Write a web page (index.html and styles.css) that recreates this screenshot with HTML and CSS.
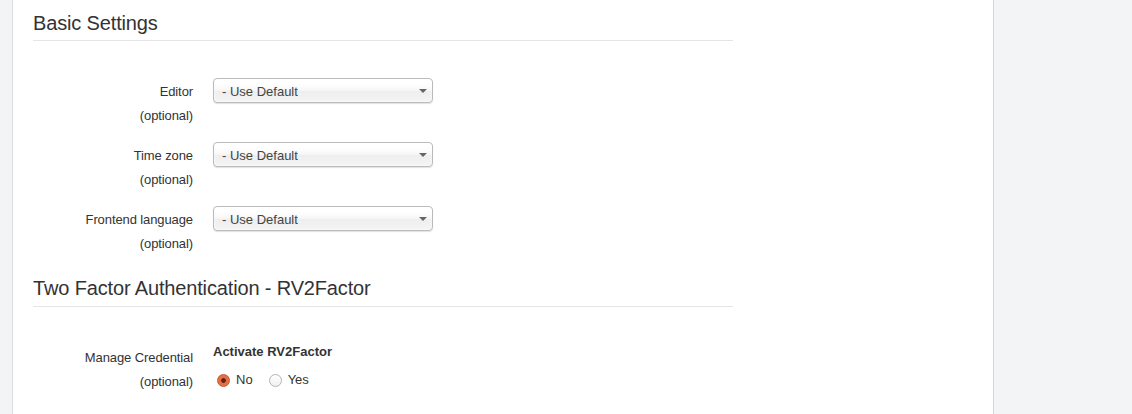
FILE: index.html
```html
<!DOCTYPE html>
<html lang="en">
<head>
  <meta charset="UTF-8">
  <meta name="viewport" content="width=device-width, initial-scale=1.0">
  <title>Edit Profile</title>
  <link rel="stylesheet" href="styles.css">
</head>
<body>
  <div class="page">
    <div class="side-left"></div>

    <div class="main">
      <div class="fieldset">
        <h2 class="legend">Basic Settings</h2>

        <div class="control-group">
          <div class="control-label">Editor<span class="optional">(optional)</span></div>
          <div class="controls">
            <div class="chzn-single"><span>- Use Default</span><b></b></div>
          </div>
        </div>

        <div class="control-group">
          <div class="control-label">Time zone<span class="optional">(optional)</span></div>
          <div class="controls">
            <div class="chzn-single"><span>- Use Default</span><b></b></div>
          </div>
        </div>

        <div class="control-group">
          <div class="control-label">Frontend language<span class="optional">(optional)</span></div>
          <div class="controls">
            <div class="chzn-single"><span>- Use Default</span><b></b></div>
          </div>
        </div>
      </div>

      <div class="fieldset second">
        <h2 class="legend">Two Factor Authentication - RV2Factor</h2>

        <div class="control-group">
          <div class="control-label">Manage Credential<span class="optional">(optional)</span></div>
          <div class="controls">
            <div class="radio-title">Activate RV2Factor</div>
            <div class="radio-row">
              <label class="radio"><input type="radio" name="rv2factor" checked> No</label>
              <label class="radio"><input type="radio" name="rv2factor"> Yes</label>
            </div>
          </div>
        </div>
      </div>
    </div>

    <div class="side-right"></div>
  </div>
</body>
</html>
```

FILE: styles.css
```css
body {
  margin: 0;
  font-family: "Liberation Sans", Arial, sans-serif;
  font-size: 13px;
  color: #333;
  background: #f3f4f6;
}
.page {
  display: flex;
  min-height: 100vh;
}
.side-left {
  width: 12px;
  background: #f3f4f6;
  border-right: 1px solid #dcdcdc;
}
.main {
  width: 940px;
  background: #fff;
  padding: 0 20px;
  border-right: 1px solid #d6d6d6;
}
.side-right {
  flex: 1;
  background: #f3f4f6;
}

.fieldset {
  width: 700px;
}
.fieldset.second {
  margin-top: 10px;
}
.legend {
  margin: 0 0 37px;
  padding: 11px 0 5px;
  font-size: 20px;
  letter-spacing: -0.15px;
  line-height: 24px;
  font-weight: normal;
  color: #333;
  border-bottom: 1px solid #e5e5e5;
}
.second .legend {
  padding: 10px 0 6px;
}

.control-group {
  display: flex;
  margin-bottom: 14px;
}
.control-group:last-child {
  margin-bottom: 0;
}
.control-label {
  width: 160px;
  margin-right: 20px;
  padding-top: 2px;
  text-align: right;
  line-height: 24px;
  letter-spacing: -0.1px;
}
.optional {
  display: block;
}
.controls {
  width: 220px;
}

.chzn-single {
  position: relative;
  box-sizing: border-box;
  height: 25px;
  padding: 2px 0 0 8px;
  line-height: 21px;
  color: #444;
  border: 1px solid #bbb;
  border-radius: 4px;
  background: linear-gradient(#fff 20%, #f6f6f6 50%, #eee 52%, #f4f4f4);
  box-shadow: 0 0 3px #fff inset, 0 1px 1px rgba(0,0,0,0.12);
}
.chzn-single b {
  position: absolute;
  right: 5px;
  top: 10px;
  width: 0;
  height: 0;
  border-left: 4px solid transparent;
  border-right: 4px solid transparent;
  border-top: 4px solid #666;
}

.radio-title {
  font-weight: bold;
  line-height: 16px;
}
.radio-row {
  display: flex;
  margin-top: 12px;
  line-height: 16px;
}
.radio {
  display: flex;
  align-items: center;
  margin-right: 12px;
}
.radio input {
  appearance: none;
  -webkit-appearance: none;
  box-sizing: border-box;
  width: 13px;
  height: 13px;
  margin: 0 6px 0 4px;
  border: 1px solid #b4b4b4;
  border-radius: 50%;
  background: linear-gradient(#fff, #f0f0f0);
}
.radio input:checked {
  border-color: #c9552e;
  background: radial-gradient(circle, #5e2411 0 2px, #e46c43 2.6px, #e8734b);
}
```
